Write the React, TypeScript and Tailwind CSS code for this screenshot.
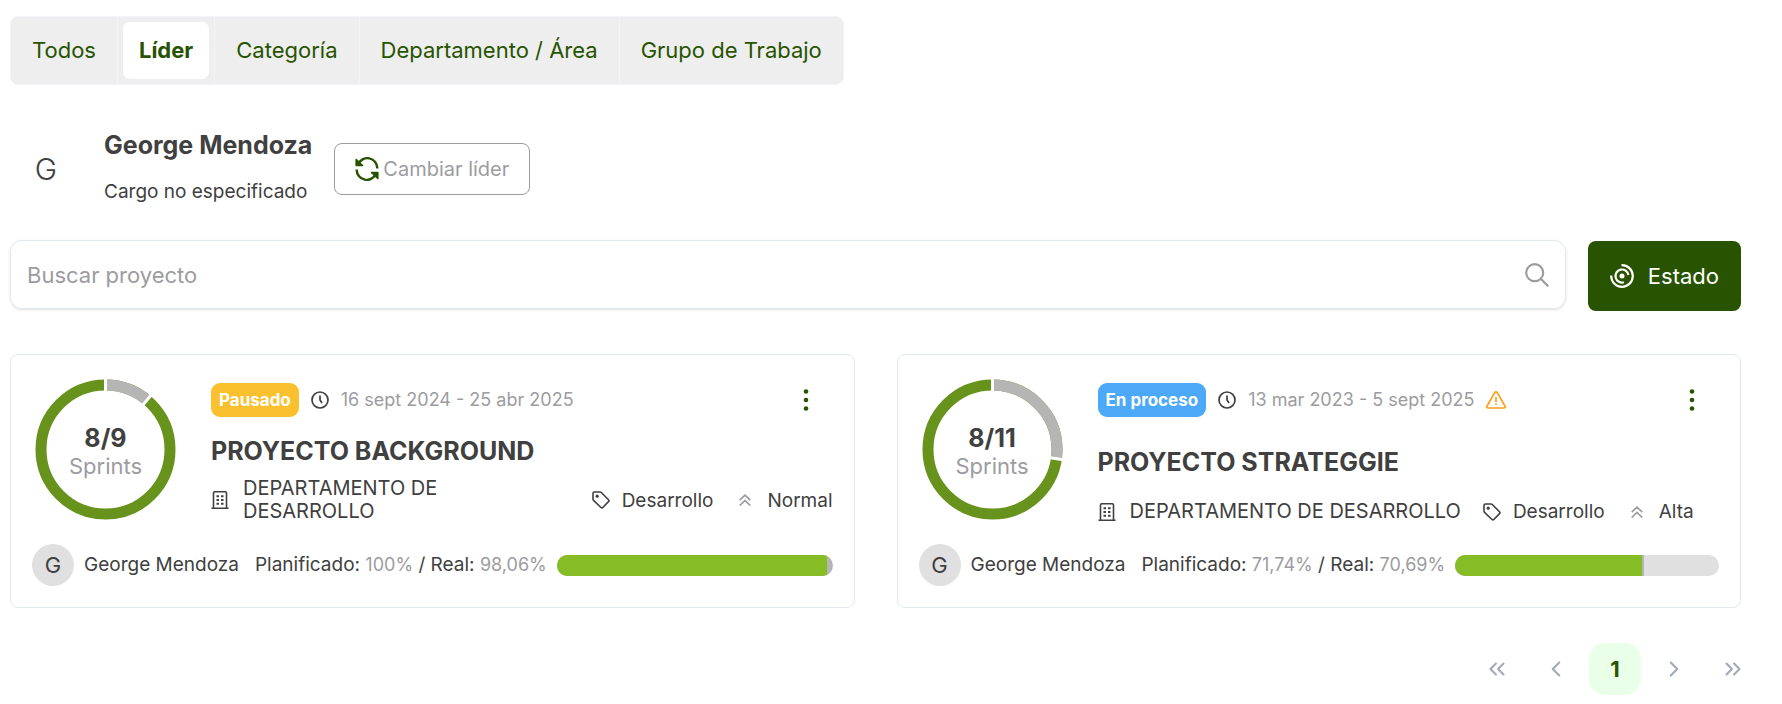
import { useState } from 'react';
import { FiChevronLeft, FiChevronRight, FiChevronsLeft, FiChevronsRight } from 'react-icons/fi';

type Project = {
  id: number;
  title: string;
  status: string;
  statusClass: string;
  dates: string;
  late?: boolean;
  department: string;
  category: string;
  priority: string;
  leader: string;
  done: number;
  total: number;
  planned: number;
  real: number;
};

const tabs = ['Todos', 'Líder', 'Categoría', 'Departamento / Área', 'Grupo de Trabajo'];

const projects: Project[] = [
  {
    id: 1,
    title: 'PROYECTO BACKGROUND',
    status: 'Pausado',
    statusClass: 'bg-[#fbc02d]',
    dates: '16 sept 2024 - 25 abr 2025',
    department: 'DEPARTAMENTO DE DESARROLLO',
    category: 'Desarrollo',
    priority: 'Normal',
    leader: 'George Mendoza',
    done: 8,
    total: 9,
    planned: 100,
    real: 98.06,
  },
  {
    id: 2,
    title: 'PROYECTO STRATEGGIE',
    status: 'En proceso',
    statusClass: 'bg-[#4ba9f7]',
    dates: '13 mar 2023 - 5 sept 2025',
    late: true,
    department: 'DEPARTAMENTO DE DESARROLLO',
    category: 'Desarrollo',
    priority: 'Alta',
    leader: 'George Mendoza',
    done: 8,
    total: 11,
    planned: 71.74,
    real: 70.69,
  },
];

const percent = (n: number) => `${String(n).replace('.', ',')}%`;

function RefreshIcon() {
  return (
    <svg viewBox="0 0 24 24" className="size-6 shrink-0" fill="none" stroke="currentColor" strokeWidth="2.4" aria-hidden="true">
      <path d="M3 7.500A10 10 0 0 1 22.300 11.500" />
      <path d="M21 16.500A10 10 0 0 1 1.700 12.500" />
      <path d="M1.200 2.500v6h6.300ZM22.800 21.500v-6h-6.300Z" fill="currentColor" strokeWidth="1.600" strokeLinejoin="round" />
    </svg>
  );
}

function StatusIcon() {
  return (
    <svg viewBox="0 0 24 24" className="size-6 shrink-0" fill="none" stroke="currentColor" strokeWidth="2.200" aria-hidden="true">
      <path d="M11.500 1.200A10.800 10.800 0 1 1 1.200 11.500" />
      <path d="M14 18.200A6.500 6.500 0 1 1 18.400 11" />
      <circle cx="12" cy="12" r="2.500" fill="currentColor" stroke="none" />
    </svg>
  );
}

function SearchIcon() {
  return (
    <svg viewBox="0 0 24 24" className="size-6" fill="none" stroke="currentColor" strokeWidth="2.200" aria-hidden="true">
      <circle cx="9.700" cy="9.700" r="8.500" />
      <path d="m15.800 15.800 7.400 7.400" />
    </svg>
  );
}

function ClockIcon() {
  return (
    <svg viewBox="0 0 18 18" className="size-[18px] shrink-0" fill="none" stroke="currentColor" strokeWidth="1.700" aria-hidden="true">
      <circle cx="9" cy="9" r="8" />
      <path d="M9 4.500V9l2 3" />
    </svg>
  );
}

function WarningIcon() {
  return (
    <svg viewBox="0 0 20 18" className="h-[18px] w-5 shrink-0 text-[#fb9f13]" fill="none" stroke="currentColor" strokeWidth="1.700" strokeLinejoin="round" role="img" aria-label="Atrasado">
      <path d="M8.700 1.700 1 15.200c-.5.900 0 1.800 1 1.800h16c1 0 1.500-.9 1-1.800L11.300 1.700c-.6-1-2-1-2.600 0Z" />
      <path d="M10 6v5M10 12.500V14" />
    </svg>
  );
}

function BuildingIcon() {
  return (
    <svg viewBox="0 0 18 18" className="size-[18px] shrink-0" fill="none" stroke="currentColor" strokeWidth="1.600" aria-hidden="true">
      <path d="M.5 17.200h17M2.500 17V2q0-1.200 1.200-1.200h10.600q1.200 0 1.200 1.200v15" />
      <path d="M5.500 5.200h2.500M10 5.200h2.500M5.500 9h2.500M10 9h2.500M5.500 12.800h2.500M10 12.800h2.500" strokeWidth="2" />
    </svg>
  );
}

function TagIcon() {
  return (
    <svg viewBox="0 0 18 18" className="size-[18px] shrink-0" fill="none" stroke="currentColor" strokeWidth="1.600" strokeLinejoin="round" aria-hidden="true">
      <path d="M1 2.500Q1 1 2.500 1H8q.8 0 1.300.5l7.200 7.300q.9.900 0 1.800l-5.700 5.900q-.9.900-1.800 0L1.500 9.300Q1 8.800 1 8Z" />
      <circle cx="5.200" cy="5.200" r="1.600" fill="currentColor" stroke="none" />
    </svg>
  );
}

function PriorityIcon() {
  return (
    <svg viewBox="0 0 12 12" className="size-3 shrink-0 text-[#9c9ca0]" fill="none" stroke="currentColor" strokeWidth="1.700" aria-hidden="true">
      <path d="m.7 6.200 5.300-5 5.300 5M.7 11.500l5.300-5 5.300 5" />
    </svg>
  );
}

function SprintsChart({ done, total }: { done: number; total: number }) {
  const r = 64.5;
  const length = 2 * Math.PI * r;
  const pending = ((total - done) / total) * length;
  const angle = ((total - done) / total) * 360;

  return (
    <div className="grid size-[147px] shrink-0 place-items-center">
      <svg viewBox="0 0 147 147" className="col-start-1 row-start-1 size-full" fill="none" aria-hidden="true">
        <g transform="rotate(-90 73.5 73.5)" strokeWidth="11">
          <circle cx="73.5" cy="73.5" r={r} stroke="#67931d" />
          <circle cx="73.5" cy="73.5" r={r} stroke="#b5b5b5" strokeDasharray={`${pending} ${length}`} />
        </g>
        <g stroke="#fff" strokeWidth="3">
          <path d="M73.500 2v15" />
          <path d="M73.500 2v15" transform={`rotate(${angle} 73.5 73.5)`} />
        </g>
      </svg>
      <div className="col-start-1 row-start-1 pt-1 text-center">
        <div className="text-[25px] leading-7 font-bold">{done}/{total}</div>
        <div className="text-[22px] leading-7 text-[#9c9ca0]">Sprints</div>
      </div>
    </div>
  );
}

function ProjectCard({ project }: { project: Project }) {
  return (
    <article className="flex flex-col gap-[21px] rounded-lg border border-[#e2e8f0] p-[21px]">
      <div className="flex gap-8">
        <SprintsChart done={project.done} total={project.total} />
        <div className="flex min-w-0 flex-1 flex-col justify-between">
          <div className="flex h-12 items-center">
            <span className={`mr-3 rounded-[9px] px-2 text-[17px] leading-[34px] font-bold text-white ${project.statusClass}`}>{project.status}</span>
            <ClockIcon />
            <span className="mx-3 text-lg text-[#9c9ca0]">{project.dates}</span>
            {project.late && <WarningIcon />}
            <button type="button" aria-label="Opciones" className="ml-auto grid h-12 w-[54px] place-items-center text-[#285300]">
              <svg viewBox="0 0 6 22" className="h-[22px] w-1.5" fill="currentColor" aria-hidden="true">
                <circle cx="3" cy="2.500" r="2.300" />
                <circle cx="3" cy="11" r="2.300" />
                <circle cx="3" cy="19.500" r="2.300" />
              </svg>
            </button>
          </div>
          <h3 className="text-[25px] leading-7 font-bold">{project.title}</h3>
          <div className="flex items-center text-[19px] leading-[23px]">
            <div className="flex items-center gap-3.5">
              <BuildingIcon />
              <span className="text-xl leading-[23px]">{project.department}</span>
            </div>
            <div className="ml-[22px] flex shrink-0 items-center gap-3">
              <TagIcon />
              <span>{project.category}</span>
            </div>
            <div className="ml-[26px] flex shrink-0 items-center gap-4">
              <PriorityIcon />
              <span>{project.priority}</span>
            </div>
          </div>
        </div>
      </div>

      <div className="flex items-center text-[19px] whitespace-nowrap">
        <span className="mr-2.5 grid size-[42px] place-items-center rounded-full bg-[#e0e0e0] text-[22px]">{project.leader[0]}</span>
        <span className="mr-4">{project.leader}</span>
        <span>
          Planificado: <span className="text-lg text-[#9c9ca0]">{percent(project.planned)}</span> / Real: <span className="text-lg text-[#9c9ca0]">{percent(project.real)}</span>
        </span>
        <div className="ml-2.5 grid h-[21px] flex-1 overflow-hidden rounded-full bg-[#e0e0e0]">
          <div className="col-start-1 row-start-1 bg-[#b5b5b5]" style={{ width: `${project.planned}%` }} />
          <div className="col-start-1 row-start-1 bg-[#86bc25]" style={{ width: `${project.real}%` }} />
        </div>
      </div>
    </article>
  );
}

export default function App() {
  const [tab, setTab] = useState('Líder');
  const [search, setSearch] = useState('');

  const visible = projects.filter((p) => p.title.toLowerCase().includes(search.toLowerCase()));

  return (
    <main className="bg-white pt-4 pr-[41px] pb-2 pl-2.5 font-['Inter',sans-serif] text-[#404040]">
      <nav className="flex w-fit divide-x divide-[#f1f5f9] overflow-hidden rounded-lg border border-[#f1f5f9] bg-[#eeeeee] text-[#285300]">
        {tabs.map((t) => (
          <div key={t} className="flex p-[5px]">
            <button
              type="button"
              onClick={() => setTab(t)}
              className={`h-[57px] rounded-[7px] px-4 text-[22px] ${t === tab ? 'bg-white font-bold' : ''}`}
            >
              {t}
            </button>
          </div>
        ))}
      </nav>

      <section className="mt-[46px] flex items-center">
        <div className="grid size-[72px] place-items-center text-3xl font-light">G</div>
        <div className="ml-[22px] flex flex-col gap-[19px]">
          <h2 className="text-[25px] leading-7 font-bold">George Mendoza</h2>
          <p className="text-[19px] leading-7">Cargo no especificado</p>
        </div>
        <button type="button" className="ml-[22px] flex h-[52px] items-center gap-1 rounded-lg border border-[#9c9ca0] px-5 text-xl text-[#9c9ca0]">
          <span className="text-[#285300]"><RefreshIcon /></span>
          Cambiar líder
        </button>
      </section>

      <div className="mt-[34px] flex gap-[22px]">
        <label className="flex h-[69px] flex-1 items-center rounded-xl border border-[#e2e8f0] px-4 text-[#9c9ca0] shadow-sm">
          <input
            type="text"
            aria-label="Buscar proyecto"
            placeholder="Buscar proyecto"
            value={search}
            onChange={(e) => setSearch(e.target.value)}
            className="h-full flex-1 text-[22px] text-[#404040] outline-none placeholder:text-[#9c9ca0]"
          />
          <SearchIcon />
        </label>
        <button type="button" className="mt-px flex h-[70px] items-center gap-3.5 rounded-lg bg-[#285300] px-[22px] text-[22px] text-white">
          <StatusIcon />
          Estado
        </button>
      </div>

      <div className="mt-[43px] grid grid-cols-2 gap-[42px]">
        {visible.map((p) => (
          <ProjectCard key={p.id} project={p} />
        ))}
      </div>

      <nav aria-label="Paginación" className="-mr-[18px] mt-[35px] flex justify-end gap-[7px] text-[#a0abbb]">
        <button type="button" aria-label="Primera página" className="grid size-[52px] place-items-center"><FiChevronsLeft size={26} /></button>
        <button type="button" aria-label="Página anterior" className="grid size-[52px] place-items-center"><FiChevronLeft size={26} /></button>
        <button type="button" aria-current="page" className="size-[52px] rounded-2xl bg-[#eaffe7] text-[22px] font-bold text-[#285300]">1</button>
        <button type="button" aria-label="Página siguiente" className="grid size-[52px] place-items-center"><FiChevronRight size={26} /></button>
        <button type="button" aria-label="Última página" className="grid size-[52px] place-items-center"><FiChevronsRight size={26} /></button>
      </nav>
    </main>
  );
}
